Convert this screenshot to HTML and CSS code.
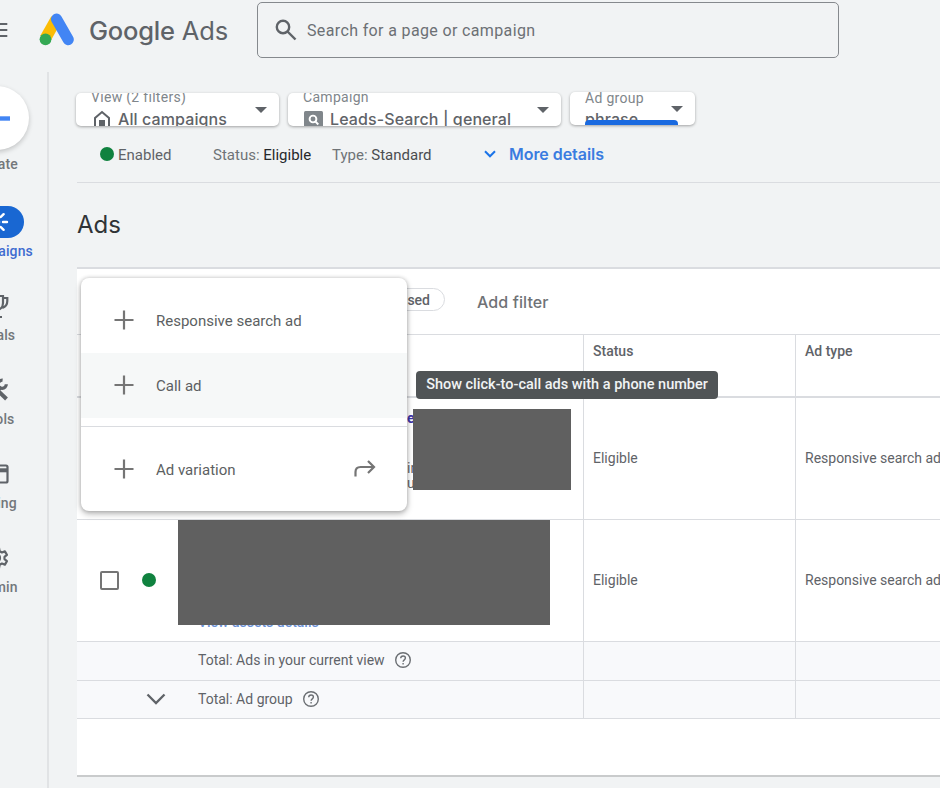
FILE: index.html
```html
<!DOCTYPE html>
<html lang="en">
<head>
<meta charset="utf-8">
<title>Google Ads</title>
<link rel="stylesheet" href="styles.css">
</head>
<body>
<header class="topbar">
  <svg class="burger" width="8" height="16" viewBox="0 0 8 16"><path d="M0 2h7.3M0 8h7.3M0 14h7.3" stroke="#5f6368" stroke-width="2"/></svg>
  <svg class="logo" width="36" height="33" viewBox="0 0 36 33"><path d="M17.3 6 6.3 25.6" stroke="#fbbc04" stroke-width="11.5"/><path d="M17.6 6.2 29.2 26.6" stroke="#4285f4" stroke-width="11.2" stroke-linecap="round"/><circle cx="6.5" cy="26.3" r="5.9" fill="#34a853"/></svg>
  <div class="brand"><span class="brand-g">Google</span> <span class="brand-a">Ads</span></div>
  <div class="search">
    <svg width="22" height="22" viewBox="0 0 22 22" fill="none" stroke="#5f6368" stroke-width="2.4"><circle cx="8" cy="8" r="6.2"/><path d="m12.5 12.5 8 8"/></svg>
    <span>Search for a page or campaign</span>
  </div>
</header>
<div class="shell">
  <nav class="rail">
    <div class="nav create"><div class="fab"><svg width="28" height="28" viewBox="0 0 28 28"><path d="M1 14.5h26" stroke="#4285f4" stroke-width="4.4"/></svg></div><span>Create</span></div>
    <div class="nav active"><div class="pill"><svg width="24" height="24" viewBox="0 0 24 24" fill="none" stroke="#fff" stroke-width="2.4" stroke-linecap="round"><circle cx="10" cy="12" r="4"/><path d="M18 12h4M15.8 7l2.8-2.8M15.8 17l2.8 2.8"/></svg></div><span>Campaigns</span></div>
    <div class="nav"><div class="glyph"><svg width="24" height="26" viewBox="0 0 24 26" fill="none" stroke="#5f6368" stroke-width="2.2"><path d="M6 3h12v7c0 9-12 9-12 0zM18 5h4.3v3c0 4-2 6-5 7M6 5H2v3c0 4 2 6 5 7M12 17v7M7 24h10"/></svg></div><span>Goals</span></div>
    <div class="nav"><div class="glyph"><svg width="24" height="26" viewBox="0 0 24 26" fill="none" stroke="#5f6368"><path d="m3 4 18.5 18" stroke-width="4"/><path d="m4 22 12-12" stroke-width="4"/><path d="M21.3 7.2a4.1 4.1 0 1 1-3.7-4" stroke-width="3.2"/></svg></div><span>Tools</span></div>
    <div class="nav"><div class="glyph"><svg width="24" height="26" viewBox="0 0 24 26" fill="none" stroke="#5f6368"><rect x="2" y="4.5" width="20.5" height="17" rx="1.5" stroke-width="2.2"/><path d="M2 9.3h20" stroke-width="4"/></svg></div><span>Billing</span></div>
    <div class="nav"><div class="glyph"><svg width="24" height="26" viewBox="0 0 24 26" fill="none" stroke="#5f6368" stroke-width="2.2" stroke-linejoin="round"><path d="M10 3h4l.6 3.2 2.3 1.3 3-1.1 2 3.5-2.4 2v2.2l2.4 2-2 3.5-3-1.1-2.3 1.3L14 23h-4l-.6-3.2-2.3-1.3-3 1.1-2-3.5 2.4-2v-2.2l-2.4-2 2-3.5 3 1.1 2.3-1.3z"/><circle cx="12" cy="13" r="3"/></svg></div><span>Admin</span></div>
  </nav>
  <main class="main">
    <div class="selectors">
      <div class="sel sel-view">
        <div class="sel-body"><div class="sel-label">View (2 filters)</div>
          <div class="sel-value v-view"><svg width="18" height="20" viewBox="0 0 18 20"><path d="M2 19V8l7-6 7 6v11z" fill="none" stroke="#5f6368" stroke-width="2"/><path d="M6 10h6v9H6z" fill="#5f6368"/></svg><span>All campaigns</span></div></div>
        <i class="caret"></i>
      </div>
      <div class="sel sel-camp">
        <div class="sel-body"><div class="sel-label">Campaign</div>
          <div class="sel-value v-camp"><svg width="19" height="18" viewBox="0 0 19 18"><rect width="19" height="18" rx="1.5" fill="#80868b"/><circle cx="9" cy="8" r="3.4" fill="none" stroke="#fff" stroke-width="1.9"/><path d="m11.3 10.4 3 3.1" stroke="#fff" stroke-width="2"/></svg><span>Leads-Search | general</span></div></div>
        <i class="caret"></i>
      </div>
      <div class="sel sel-group">
        <div class="sel-body"><div class="sel-label">Ad group</div><div class="sel-value v-group"><span>phrase</span></div></div>
        <i class="caret"></i><b class="underline"></b>
      </div>
    </div>
    <div class="statusline">
      <i class="dot"></i><span class="s-enabled">Enabled</span>
      <span class="s-status">Status: <em>Eligible</em></span>
      <span class="s-type">Type: <em>Standard</em></span>
      <svg class="chev" width="12" height="8" viewBox="0 0 12 8"><path d="m1 1.3 5 5 5-5" fill="none" stroke="#1a73e8" stroke-width="2"/></svg>
      <a class="more">More details</a>
    </div>
    <h1>Ads</h1>
    <section class="card">
      <div class="toolbar"><div class="chip">Paused</div><span class="addfilter">Add filter</span></div>
      <div class="grid">
        <div class="cell head"></div><div class="cell head">Status</div><div class="cell head last">Ad type</div>
        <div class="cell row first">
          <span class="frag frag-a">e</span><span class="frag frag-b">in</span><span class="frag frag-c">ul</span>
          <div class="block block-a"></div>
        </div>
        <div class="cell row">Eligible</div><div class="cell row last">Responsive search ad</div>
        <div class="cell row second">
          <i class="check"></i><i class="dot"></i><span class="assets">View assets details</span>
          <div class="block block-b"></div>
        </div>
        <div class="cell row">Eligible</div><div class="cell row last">Responsive search ad</div>
        <div class="cell total"><span>Total: Ads in your current view</span><svg width="18" height="18" viewBox="0 0 18 18" fill="none" stroke="#6b6f73" stroke-width="1.4"><circle cx="9" cy="9" r="7.3"/><path d="M6.7 7.3c.1-3.2 4.7-3 4.7-.2 0 1.7-2.3 1.8-2.3 3.6M9.1 12v1.6"/></svg></div><div class="cell total"></div><div class="cell total last"></div>
        <div class="cell total"><svg class="expand" width="20" height="12" viewBox="0 0 20 12"><path d="m1.5 1.5 8.5 8.5 8.5-8.5" fill="none" stroke="#5f6368" stroke-width="2.3"/></svg><span>Total: Ad group</span><svg width="18" height="18" viewBox="0 0 18 18" fill="none" stroke="#6b6f73" stroke-width="1.4"><circle cx="9" cy="9" r="7.3"/><path d="M6.7 7.3c.1-3.2 4.7-3 4.7-.2 0 1.7-2.3 1.8-2.3 3.6M9.1 12v1.6"/></svg></div><div class="cell total"></div><div class="cell total last"></div>
      </div>
      <div class="menu">
        <div class="item"><svg width="20" height="20" viewBox="0 0 20 20"><path d="M10 .5v19M.5 10h19" stroke="#757575" stroke-width="2.2"/></svg><span>Responsive search ad</span></div>
        <div class="item hover"><svg width="20" height="20" viewBox="0 0 20 20"><path d="M10 .5v19M.5 10h19" stroke="#757575" stroke-width="2.2"/></svg><span>Call ad</span></div>
        <div class="sep"></div>
        <div class="item"><svg width="20" height="20" viewBox="0 0 20 20"><path d="M10 .5v19M.5 10h19" stroke="#757575" stroke-width="2.2"/></svg><span>Ad variation</span><svg class="go" width="22" height="18" viewBox="0 0 22 18"><path d="M1.5 16.5V12q0-5 5-5H20M14 1l6 6-6 6" fill="none" stroke="#757575" stroke-width="2.2"/></svg></div>
      </div>
      <div class="tip">Show click-to-call ads with a phone number</div>
    </section>
  </main>
</div>
</body>
</html>
```
FILE: styles.css
```css
* { box-sizing: border-box; }
html, body { margin: 0; height: 788px; overflow: hidden; }
body { background: #f1f3f4; font: 14px/20px Roboto, sans-serif; color: #5f6368; white-space: nowrap; }
svg { display: block; flex: none; }
em { font-style: normal; }

.topbar { height: 72px; display: flex; align-items: flex-start; }
.burger { margin-top: 22px; }
.logo { margin: 13px 0 0 31px; }
.brand { width: 168px; margin: 14px 0 0 14px; font: 25.5px/34px Inter, sans-serif; color: #5f6368; letter-spacing: -.2px; }
.brand-g { font-weight: 500; }
.search { width: 582px; height: 56px; margin-top: 2px; border: 1.5px solid #85898d; border-radius: 5px; display: flex; align-items: center; padding-left: 17px; font-size: 16px; letter-spacing: .36px; color: #6c7074; }
.search span { margin: 2px 0 0 10px; }

.shell { display: flex; height: 716px; }
.rail { width: 97px; height: 716px; margin-left: -48px; padding: 14px 5px 0 0; border-right: 2px solid #e1e3e5; display: flex; flex-direction: column; align-items: center; flex: none; }
.nav { display: flex; flex-direction: column; align-items: center; height: 84px; font-size: 14px; font-weight: 500; letter-spacing: .1px; line-height: 20px; color: #73777b; }
.nav.create { height: 120px; }
.fab { width: 64px; height: 64px; margin-bottom: 4px; border-radius: 50%; background: #fff; box-shadow: 0 2px 5px #0003; display: flex; align-items: center; justify-content: center; }
.pill { width: 54px; height: 32px; margin-bottom: 3px; border-radius: 16px; background: #1967d2; display: flex; align-items: center; justify-content: center; }
.nav.active { color: #3f6cd0; }
.glyph { height: 32px; margin-bottom: 3px; display: flex; align-items: center; }

.main { flex: 1; min-width: 0; padding-left: 28px; }
.selectors { display: flex; height: 64px; margin-left: -1px; padding-top: 20px; align-items: flex-start; }
.sel { position: relative; height: 33px; background: #fff; border-radius: 5px; box-shadow: 0 1px 3px #0005; overflow: hidden; display: flex; }
.sel-view { width: 203px; margin: 1px 9px 0 0; }
.sel-camp { width: 273px; margin: 1px 9px 0 0; }
.sel-group { width: 125px; }
.sel-body { flex: 1; padding-left: 15px; margin-top: -5px; }
.sel-group .sel-body { margin-top: -3px; }
.sel-label { font-size: 14px; line-height: 18px; letter-spacing: .3px; color: #80868b; }
.sel-value { display: flex; align-items: center; height: 26px; font: 500 16px/26px Inter, sans-serif; letter-spacing: .1px; color: #5f6368; }
.v-view svg { margin: 2px 7px 0 2px; }
.v-camp svg { margin: 1px 7px 0 1px; }
.v-group { height: 24px; }
.caret { width: 0; height: 0; border: 6.5px solid transparent; border-top-color: #5f6368; border-bottom: 0; margin: 14px 12px 0 0; }
.underline { position: absolute; left: 15px; right: 17px; bottom: 0; height: 5px; background: #1a6ae0; border-radius: 4px 4px 0 0; }

.statusline { display: flex; align-items: center; height: 36px; }
.dot { width: 14px; height: 14px; border-radius: 50%; background: #10823f; flex: none; }
.statusline .dot { margin-left: 23px; }
.statusline span { font-size: 15px; padding-top: 2px; }
.s-enabled { width: 95px; margin-left: 4px; color: #5f6368; }
.s-status { width: 119px; color: #6f7377; }
.s-type { width: 152px; color: #6f7377; }
.s-status em { color: #26282b; }
.s-type em { color: #4a4d50; }
.more { margin-left: 13px; font: 600 16px/20px Inter, sans-serif; letter-spacing: -.05px; color: #3a7ce0; }
h1 { margin: 10px 0 0; height: 84px; padding-top: 25px; border-top: 1px solid #dadce0; font: 400 24px/34px Inter, sans-serif; color: #303336; }

.card { position: relative; height: 510px; margin-top: 1px; background: #fff; border-top: 2px solid #dadce0; border-bottom: 2px solid #c9cbcc; }
.toolbar { height: 65px; padding: 19px 0 0 288px; display: flex; align-items: flex-start; }
.chip { width: 80px; height: 23px; border: 1px solid #dadce0; border-radius: 12px; padding-right: 14px; text-align: right; line-height: 22px; font-weight: 500; }
.addfilter { margin: 4px 0 0 32px; font: 500 16px/20px Inter, sans-serif; letter-spacing: .1px; color: #6f7276; }
.grid { display: grid; grid-template-columns: 507px 212px 1fr; grid-template-rows: 63px 122px 122px 39px 38px; border-top: 1px solid #dadce0; }
.cell { border-right: 1px solid #dadce0; border-bottom: 1px solid #dadce0; padding-left: 9px; display: flex; min-width: 0; }
.last { border-right: 0; }
.head { border-bottom-width: 2px; padding-top: 6px; font-weight: 500; }
.row { position: relative; align-items: center; padding-bottom: 1px; }
.second { padding-left: 23px; }
.second .dot { margin-left: 23px; }
.check { width: 19px; height: 19px; border: 2px solid #757575; border-radius: 2px; }
.total { background: #f8f9fb; align-items: center; padding: 0 0 2px 121px; }
.total svg { margin-left: 9px; }
.total .expand { margin: 0 32px 0 -52px; }
.block { position: absolute; background: #606060; }
.block-a { left: 336px; top: 11px; width: 158px; height: 81px; }
.block-b { left: 101px; top: 0; width: 372px; height: 105px; }
.assets { position: absolute; left: 121px; top: 92px; font-weight: 500; color: #6b91d6; }
.frag { position: absolute; left: 330px; line-height: 16px; }
.frag-a { top: 12px; color: #3f35a8; font-weight: 700; }
.frag-b { top: 62px; }
.frag-c { top: 77px; }

.menu { position: absolute; left: 4px; top: 9px; width: 326px; height: 233px; padding-top: 10px; background: #fff; border-radius: 8px; box-shadow: 0 3px 6px #0004, 0 0 4px #0003; }
.item { height: 65px; padding: 0 0 1px 33px; display: flex; align-items: center; color: #5c5f62; }
.item span { margin: 2px 0 0 22px; font-size: 15px; }
.item svg { margin-top: -1px; }
.hover { background: #f6f8f8; }
.sep { margin: 8px 0 10px; height: 1px; background: #dadce0; }
.item .go { margin: -1px 31px 0 auto; }
.tip { position: absolute; left: 339px; top: 102px; width: 302px; height: 28px; border-radius: 4px; background: #505456; color: #f1f3f4; font-size: 14.5px; font-weight: 500; line-height: 28px; text-align: center; }
```
